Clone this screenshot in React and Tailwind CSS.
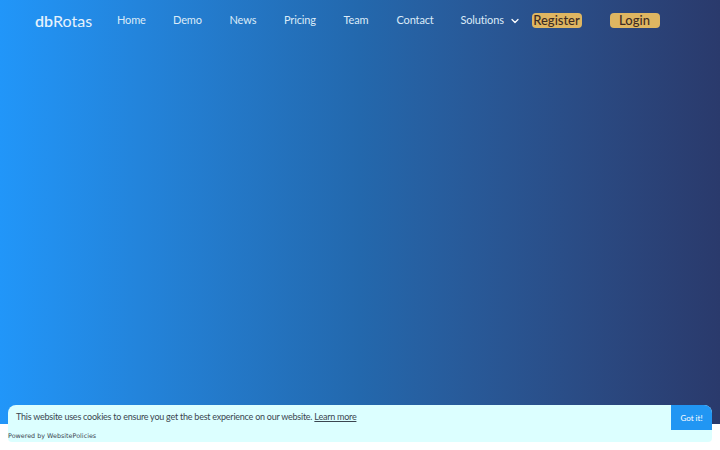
import React from 'react';
import { ChevronDown } from 'lucide-react';

const links = [
  { label: 'Home', width: 'w-[56px]' },
  { label: 'Demo', width: 'w-[56.5px]' },
  { label: 'News', width: 'w-[54.5px]' },
  { label: 'Pricing', width: 'w-[59.5px]' },
  { label: 'Team', width: 'w-[53px]' },
  { label: 'Contact', width: 'w-[64px]' },
];

const App = () => {
  return (
    <div className="relative h-[450px] w-[720px] overflow-hidden bg-white font-['Lato',sans-serif]">
      <div className="h-[424px] bg-gradient-to-r from-[#2196f9] via-[#2368ad] to-[#2a3a6c]">
        <nav className="flex items-start pl-[35px] pt-[12px]">
          <a className="w-[82px] text-[16px] leading-[17px] text-[#e6f2fc]">
            <span className="font-semibold">db</span>Rotas
          </a>
          {links.map((link) => (
            <a key={link.label} className={`${link.width} text-[11px] leading-[15px] tracking-[-0.15px] text-[#dcebf8]`}>
              {link.label}
            </a>
          ))}
          <a className="w-[71px] text-[11px] leading-[15px] tracking-[-0.15px] text-[#dcebf8]">
            <span className="flex items-center">
              Solutions
              <ChevronDown className="ml-[5px] mt-[2px] h-[12px] w-[12px] text-white" strokeWidth={2.5} />
            </span>
          </a>
          <a className="mt-[1px] flex h-[15px] w-[50px] items-center justify-center rounded-[4px] bg-[#dfb661] text-[13px] font-medium text-[#3d2b24]">
            Register
          </a>
          <a className="ml-[28px] mt-[1px] flex h-[15px] w-[50px] items-center justify-center rounded-[4px] bg-[#dfb661] text-[13px] font-medium text-[#3d2b24]">
            Login
          </a>
        </nav>
      </div>

      <div className="absolute left-[8px] top-[405px] h-[37px] w-[704px] rounded-t-[8px] rounded-b-[4px] bg-[#dcffff]">
        <div className="flex items-start justify-between">
          <p className="pl-[8px] pt-[5px] text-[9px] leading-[14px] tracking-[-0.24px] text-[#3b4650]">
            This website uses cookies to ensure you get the best experience on our website.{' '}
            <a className="underline">Learn more</a>
          </p>
          <button className="h-[25px] w-[41px] rounded-tr-[8px] bg-[#2196f3] text-[8px] text-white">Got it!</button>
        </div>
      </div>
      <p className="absolute left-[8px] top-[431px] font-['DejaVu_Sans',sans-serif] text-[6.4px] leading-[10px] text-[#3b4650]">
        Powered by WebsitePolicies
      </p>
    </div>
  );
};

export default App;
